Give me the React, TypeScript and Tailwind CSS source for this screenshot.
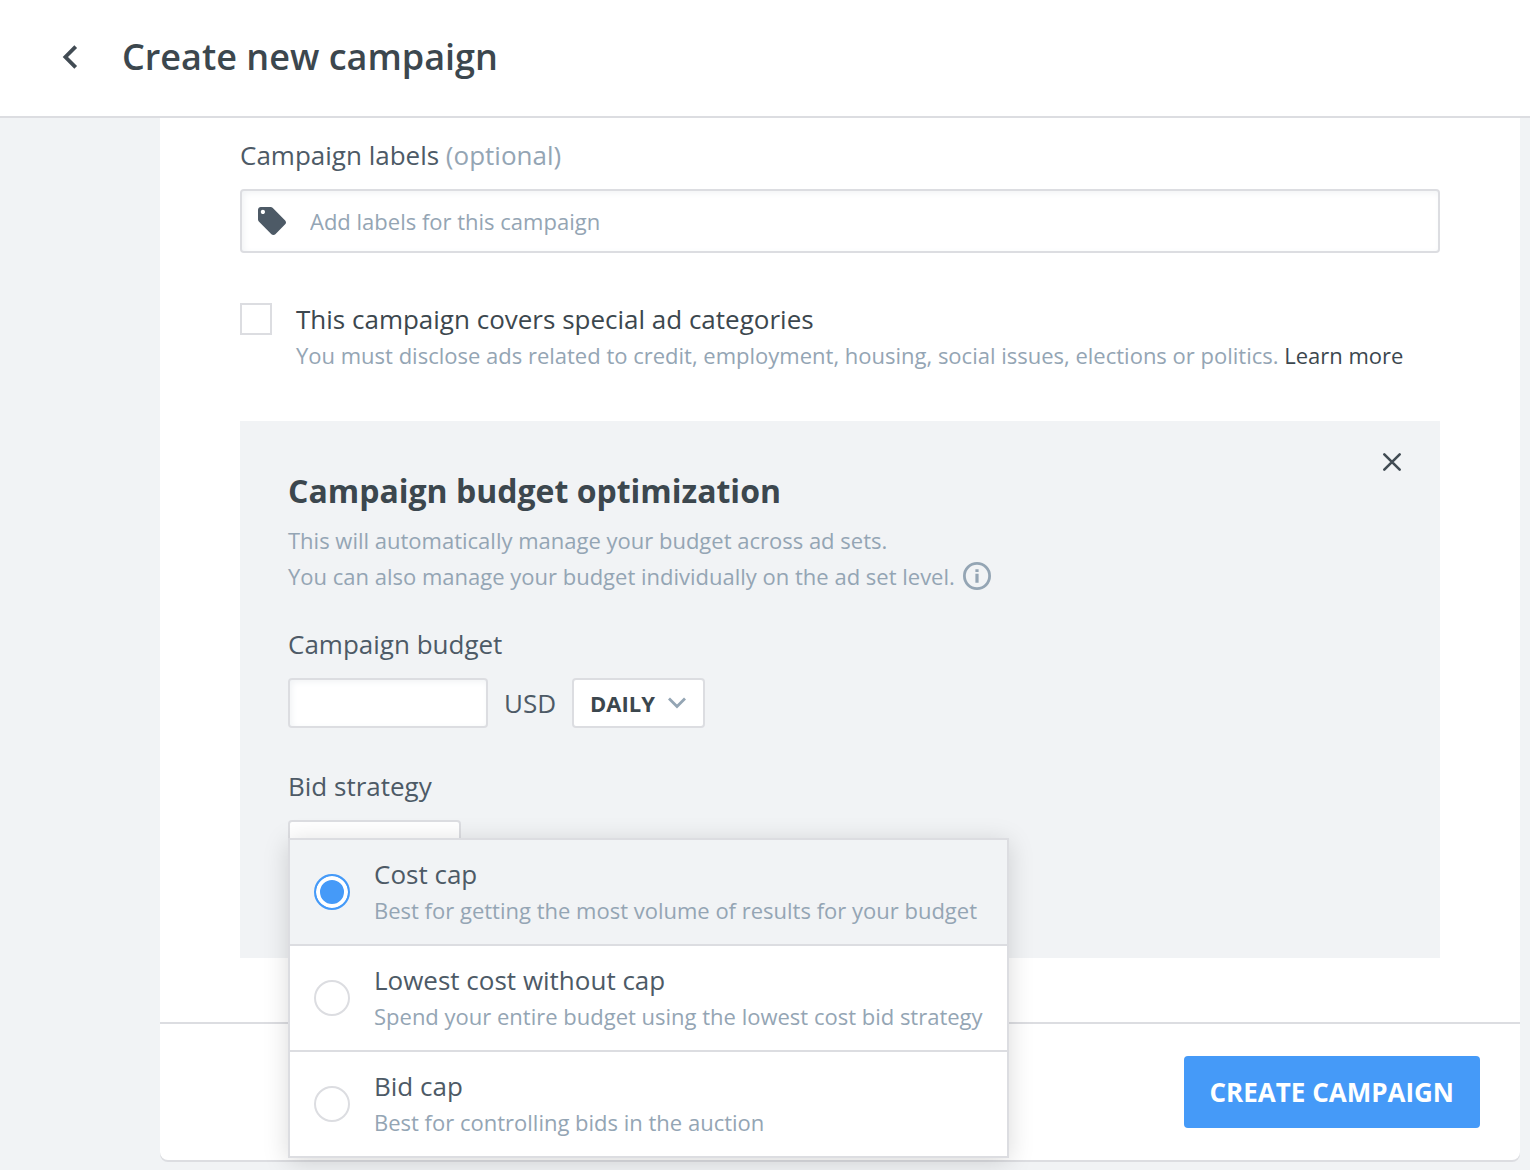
import { useState } from "react";

const strategies = [
  {
    id: "cost-cap",
    name: "Cost cap",
    hint: "Best for getting the most volume of results for your budget",
  },
  {
    id: "lowest-cost",
    name: "Lowest cost without cap",
    hint: "Spend your entire budget using the lowest cost bid strategy",
  },
  {
    id: "bid-cap",
    name: "Bid cap",
    hint: "Best for controlling bids in the auction",
  },
];

function BackIcon() {
  return (
    <svg className="h-6 w-4" viewBox="0 0 16 24" fill="none" stroke="#414b53" strokeWidth="3.8" strokeLinejoin="miter" aria-hidden="true">
      <path d="M13.7 1.7 3.4 12l10.3 10.3" />
    </svg>
  );
}

function TagIcon() {
  return (
    <svg className="size-7 shrink-0" viewBox="2 2 20 20" fill="#4d5a66" aria-hidden="true">
      <path d="M21.41 11.58l-9-9C12.05 2.22 11.55 2 11 2H4c-1.1 0-2 .9-2 2v7c0 .55.22 1.05.59 1.42l9 9c.36.36.86.58 1.41.58s1.05-.22 1.41-.59l7-7c.37-.36.59-.86.59-1.41s-.23-1.06-.59-1.42zM5.5 7C4.67 7 4 6.33 4 5.5S4.67 4 5.5 4 7 4.67 7 5.5 6.33 7 5.5 7z" />
    </svg>
  );
}

function CloseIcon() {
  return (
    <svg className="size-5" viewBox="0 0 20 20" fill="none" stroke="#414b53" strokeWidth="2.6" strokeLinecap="round" aria-hidden="true">
      <path d="M2.3 2.3l15.4 15.4M17.7 2.3L2.3 17.7" />
    </svg>
  );
}

function InfoIcon() {
  return (
    <svg className="size-7" viewBox="0 0 28 28" fill="none" aria-hidden="true">
      <circle cx="14" cy="14" r="12.6" stroke="#94a5b4" strokeWidth="2.8" />
      <path d="M12.4 7.2h3.2v2.8h-3.2zM12.4 11.8h3.2v9h-3.2z" fill="#94a5b4" />
    </svg>
  );
}

function ChevronDown({ className }: { className: string }) {
  return (
    <svg className={className} viewBox="0 0 20 14" fill="none" stroke="#94a5b4" strokeWidth="2.8" aria-hidden="true">
      <path d="M2 2.5l8 8 8-8" />
    </svg>
  );
}

export default function App() {
  const [strategy, setStrategy] = useState("cost-cap");

  return (
    <div className="min-h-screen bg-[#f1f3f5] font-['Open_Sans',sans-serif] text-[26px] leading-9 text-[#4d5a66]">
      <header className="flex items-center gap-11 border-b-2 border-[#dcdde1] bg-white px-[62px] pt-[31px] pb-[33px]">
        <button type="button" aria-label="Back">
          <BackIcon />
        </button>
        <h1 className="text-[36px] leading-[52px] font-semibold text-[#3c474e]">Create new campaign</h1>
      </header>

      <main className="pr-2.5 pb-2 pl-40">
        <form className="rounded-b-lg bg-white shadow-[0_2px_0_#dcdde1]">
          <div className="px-20 pt-[19px] pb-16">
            <label htmlFor="labels" className="block">
              Campaign labels <span className="text-[#94a5b4]">(optional)</span>
            </label>
            <div className="mt-4 flex h-16 items-center gap-6 rounded-sm border-2 border-[#dcdde1] px-4 shadow-[inset_2px_2px_6px_#f1f3f5]">
              <TagIcon />
              <input
                id="labels"
                type="text"
                placeholder="Add labels for this campaign"
                className="min-w-0 flex-1 bg-transparent text-[22px] outline-none placeholder:text-[#94a5b4]"
              />
            </div>

            <div className="mt-12 flex gap-6">
              <input
                id="special"
                type="checkbox"
                className="mt-0.5 size-8 shrink-0 appearance-none border-2 border-[#dcdde1] bg-white checked:bg-[#459af8]"
              />
              <div>
                <label htmlFor="special" className="block text-[#3c474e]">
                  This campaign covers special ad categories
                </label>
                <p className="text-[22px] text-[#94a5b4]">
                  You must disclose ads related to credit, employment, housing, social issues, elections or politics.{" "}
                  <a href="#learn-more" className="text-[#3c474e]">
                    Learn more
                  </a>
                </p>
              </div>
            </div>

            <section className="relative mt-12 bg-[#f1f3f5] px-12 pt-12 pb-[88px]">
              <button type="button" aria-label="Close" className="absolute top-[31px] right-[38px]">
                <CloseIcon />
              </button>
              <h2 className="text-[32px] leading-[44px] font-bold text-[#3c474e]">Campaign budget optimization</h2>
              <p className="mt-[9px] text-[22px] text-[#94a5b4]">
                This will automatically manage your budget across ad sets.
              </p>
              <div className="flex items-center gap-2 text-[22px] text-[#94a5b4]">
                <p>You can also manage your budget individually on the ad set level.</p>
                <button type="button" aria-label="More information">
                  <InfoIcon />
                </button>
              </div>

              <label htmlFor="budget" className="mt-8 block">
                Campaign budget
              </label>
              <div className="mt-4 flex items-center gap-4">
                <input
                  id="budget"
                  type="text"
                  className="h-[50px] w-[200px] rounded-sm border-2 border-[#dcdde1] bg-white px-4 text-[22px] shadow-[inset_2px_2px_6px_#f1f3f5] outline-none"
                />
                <span>USD</span>
                <div className="relative">
                  <select
                    aria-label="Budget period"
                    className="h-[50px] w-[133px] appearance-none rounded-sm border-2 border-[#dcdde1] bg-white px-4 text-[22px] font-bold text-[#3c474e]"
                  >
                    <option>DAILY</option>
                    <option>LIFETIME</option>
                  </select>
                  <ChevronDown className="pointer-events-none absolute top-[18px] right-[18px] h-3.5 w-5" />
                </div>
              </div>

              <h3 id="bid-heading" className="mt-10">
                Bid strategy
              </h3>
              <div className="relative mt-4 w-max">
                <button
                  type="button"
                  aria-haspopup="true"
                  aria-expanded="true"
                  className="flex h-[50px] items-center gap-3 rounded-sm border-2 border-[#dcdde1] bg-white px-4 text-[22px] font-bold text-[#3c474e]"
                >
                  COST CAP
                  <ChevronDown className="h-3.5 w-5" />
                </button>
                <div
                  role="radiogroup"
                  aria-labelledby="bid-heading"
                  className="absolute top-[18px] left-0 z-10 w-max divide-y-2 divide-[#dcdde1] border-2 border-[#dcdde1] bg-white shadow-[0_4px_24px_rgba(0,0,0,0.15)]"
                >
                  {strategies.map((s) => (
                    <label key={s.id} className="flex items-center gap-6 px-6 py-4 has-checked:bg-[#f1f3f5]">
                      <input
                        type="radio"
                        name="strategy"
                        aria-label={s.name}
                        checked={strategy === s.id}
                        onChange={() => setStrategy(s.id)}
                        className="size-9 shrink-0 appearance-none rounded-full border-2 border-[#dcdde1] bg-white checked:border-[#459af8] checked:bg-[#459af8] checked:shadow-[inset_0_0_0_4px_white]"
                      />
                      <span>
                        <span className="block">{s.name}</span>
                        <span className="block text-[22px] text-[#94a5b4]">{s.hint}</span>
                      </span>
                    </label>
                  ))}
                </div>
              </div>
            </section>
          </div>

          <footer className="flex justify-end border-t-2 border-[#dcdde1] px-10 py-8">
            <button type="submit" className="h-[72px] rounded-sm bg-[#459af8] px-[26px] font-bold text-white">
              CREATE CAMPAIGN
            </button>
          </footer>
        </form>
      </main>
    </div>
  );
}
